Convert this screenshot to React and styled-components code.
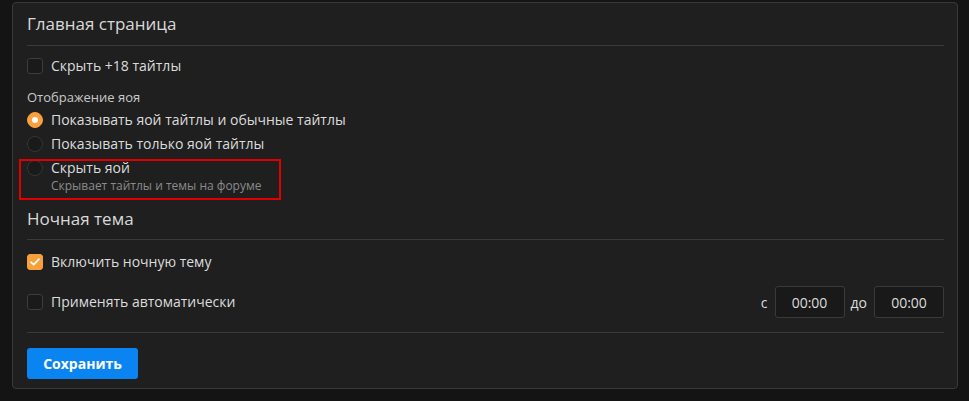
import React from "react";
import styled, { createGlobalStyle } from "styled-components";

const GlobalStyle = createGlobalStyle`
  body {
    margin: 0;
    background: #141414;
    font-family: "Open Sans", "Noto Sans", sans-serif;
  }
`;

const Page = styled.div`
  padding: 2px 11px 0 12px;
`;

const Panel = styled.div`
  background: #1f1f1f;
  border: 1px solid #393939;
  border-radius: 4px;
  padding: 9px 13px 9px 14px;
  display: flex;
  flex-direction: column;
  height: 387px;
  box-sizing: border-box;
`;

const SectionTitle = styled.div`
  font-size: 17px;
  line-height: 24px;
  color: #d9d9d9;
  margin-top: ${p => p.$mt || 0}px;
`;

const Divider = styled.div`
  height: 1px;
  background: #3a3a3a;
  margin-top: ${p => p.$mt || 0}px;
`;

const Row = styled.div`
  display: flex;
  align-items: center;
  min-height: 24px;
  margin-top: ${p => p.$mt || 0}px;
`;

const CheckBox = styled.span`
  width: 16px;
  height: 16px;
  box-sizing: border-box;
  border-radius: 3px;
  border: 1px solid ${p => (p.$checked ? "#f7a13c" : "#3c3c3c")};
  background: ${p => (p.$checked ? "#f7a13c" : "#1a1a1a")};
  display: flex;
  align-items: center;
  justify-content: center;
  flex-shrink: 0;
`;

const Label = styled.span`
  font-size: 14px;
  line-height: 24px;
  color: #dcdcdc;
  margin-left: 8px;
`;

const GroupLabel = styled.div`
  font-size: 13px;
  line-height: 18px;
  color: #c9c9c9;
  margin: 10px 0 2px;
`;

const Option = styled.div`
  position: relative;
  display: flex;
  align-items: flex-start;
`;

const Radio = styled.span`
  width: 16px;
  height: 16px;
  box-sizing: border-box;
  border-radius: 50%;
  margin-top: 4px;
  flex-shrink: 0;
  border: 1px solid ${p => (p.$checked ? "#f7a13c" : "#363636")};
  background: ${p => (p.$checked ? "#f7a13c" : "#1a1a1a")};
  display: flex;
  align-items: center;
  justify-content: center;

  &::after {
    content: "";
    display: ${p => (p.$checked ? "block" : "none")};
    width: 6px;
    height: 6px;
    border-radius: 50%;
    background: #fff;
  }
`;

const OptionText = styled.div`
  display: flex;
  flex-direction: column;
`;

const Hint = styled.span`
  font-size: 12px;
  line-height: 16px;
  color: #8b8b8b;
  margin-left: 8px;
  margin-top: -2px;
`;

const Highlight = styled.div`
  position: absolute;
  left: -8px;
  top: 3px;
  width: 262px;
  height: 41px;
  box-sizing: border-box;
  border: 2px solid #e10000;
  pointer-events: none;
`;

const TimeGroup = styled.div`
  margin-left: auto;
  display: flex;
  align-items: center;
`;

const TimeWord = styled.span`
  font-size: 14px;
  color: #dcdcdc;
  margin: 0 7px 0 6px;
`;

const TimeInput = styled.div`
  width: 70px;
  height: 32px;
  box-sizing: border-box;
  border: 1px solid #3a3a3a;
  border-radius: 3px;
  background: #191919;
  color: #dcdcdc;
  font-size: 14px;
  display: flex;
  align-items: center;
  justify-content: center;
`;

const SaveButton = styled.button`
  align-self: flex-start;
  margin-top: 15px;
  width: 111px;
  height: 31px;
  border: none;
  border-radius: 3px;
  background: #0a84f0;
  color: #fff;
  font-family: "Open Sans", "Noto Sans", sans-serif;
  font-weight: 700;
  font-size: 14px;
  cursor: pointer;
`;

function Check() {
  return (
    <svg width="10" height="8" viewBox="0 0 10 8" fill="none">
      <path d="M1 4.2L3.7 6.6L9 1.2" stroke="#fff" strokeWidth="1.7" strokeLinecap="round" strokeLinejoin="round" />
    </svg>
  );
}

export default function App() {
  return (
    <>
      <GlobalStyle />
      <Page>
        <Panel>
          <SectionTitle>Главная страница</SectionTitle>
          <Divider $mt={9} />
          <Row $mt={8}>
            <CheckBox />
            <Label>Скрыть +18 тайтлы</Label>
          </Row>

          <GroupLabel>Отображение яоя</GroupLabel>
          <Option>
            <Radio $checked />
            <Label>Показывать яой тайтлы и обычные тайтлы</Label>
          </Option>
          <Option>
            <Radio />
            <Label>Показывать только яой тайтлы</Label>
          </Option>
          <Option>
            <Radio />
            <OptionText>
              <Label>Скрыть яой</Label>
              <Hint>Скрывает тайтлы и темы на форуме</Hint>
            </OptionText>
            <Highlight />
          </Option>

          <SectionTitle $mt={13}>Ночная тема</SectionTitle>
          <Divider $mt={8} />
          <Row $mt={10}>
            <CheckBox $checked>
              <Check />
            </CheckBox>
            <Label>Включить ночную тему</Label>
          </Row>
          <Row $mt={12}>
            <CheckBox />
            <Label>Применять автоматически</Label>
            <TimeGroup>
              <TimeWord>с</TimeWord>
              <TimeInput>00:00</TimeInput>
              <TimeWord>до</TimeWord>
              <TimeInput>00:00</TimeInput>
            </TimeGroup>
          </Row>
          <Divider $mt={14} />
          <SaveButton>Сохранить</SaveButton>
        </Panel>
      </Page>
    </>
  );
}
